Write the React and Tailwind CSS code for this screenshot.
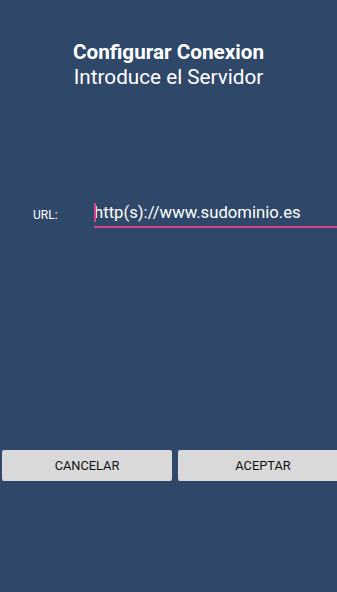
export default function App() {
  return (
    <div className="w-[337px] h-[592px] bg-[#2f4869] flex flex-col overflow-hidden" style={{ fontFamily: "Roboto, 'Noto Sans', sans-serif" }}>
      <div className="pt-[40px] flex flex-col items-center text-white">
        <div className="text-[20.7px] leading-[25px] font-bold">Configurar Conexion</div>
        <div className="text-[20.7px] leading-[25px]">Introduce el Servidor</div>
      </div>
      <div className="mt-[103px] flex items-start">
        <div className="w-[94px] pl-[33px] pt-[13px] text-[12px] text-white">URL:</div>
        <div className="flex-1 relative">
          <div className="h-[33px] flex items-end pb-[3px] text-[16.7px] leading-[20px] text-white">
            http(s)://www.sudominio.es
          </div>
          <div className="absolute left-0 top-[10px] w-[2px] h-[19px] bg-[#d9448a]" />
          <div className="h-[2px] bg-[#d9448a]" />
        </div>
      </div>
      <div className="mt-[222px] flex gap-[6px] pl-[2px]">
        <div className="w-[170px] shrink-0 h-[31px] bg-[#d9d9d9] rounded-[2px] flex items-center justify-center text-[12.8px] text-[#111]">CANCELAR</div>
        <div className="w-[170px] shrink-0 h-[31px] bg-[#d9d9d9] rounded-[2px] flex items-center justify-center text-[12.8px] text-[#111]">ACEPTAR</div>
      </div>
    </div>
  );
}
